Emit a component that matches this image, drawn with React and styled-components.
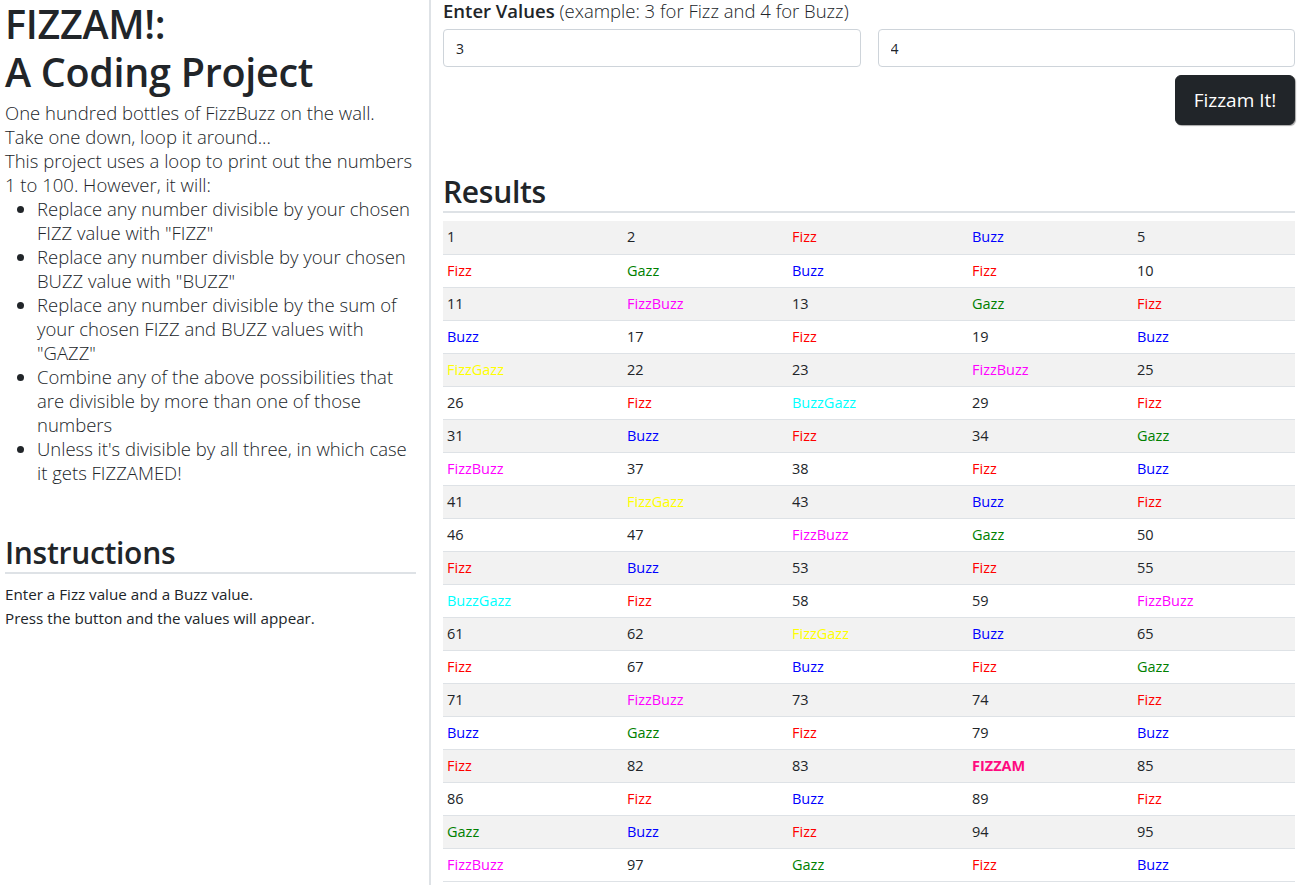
import React from "react";
import styled, { createGlobalStyle } from "styled-components";

const Global = createGlobalStyle`
  html, body { margin: 0; padding: 0; background: #fff; }
  body {
    font-family: "Open Sans", "Noto Sans", sans-serif;
    color: #212529;
    font-size: 16px;
    line-height: 1.5;
  }
  * { box-sizing: border-box; }
`;

const Page = styled.div`
  display: flex;
  align-items: stretch;
  min-height: 885px;
`;

const Side = styled.aside`
  width: 431px;
  flex: none;
  padding: 0 13px 0 5px;
  border-right: 2px solid #dee2e6;
`;

const Main = styled.main`
  flex: 1;
  padding: 0 5px 0 12px;
`;

const Title = styled.h1`
  margin: 0 0 5px;
  font-size: 39.5px;
  font-weight: 600;
  line-height: 48px;
  letter-spacing: -0.3px;
`;

const Lead = styled.p`
  margin: 0;
  font-size: 18.5px;
  font-weight: 300;
  line-height: 24px;
`;

const RuleList = styled.ul`
  margin: 0;
  padding-left: 32px;
  font-size: 18.5px;
  font-weight: 300;
  line-height: 24px;
`;

const SectionTitle = styled.h2`
  margin: ${(p) => p.$top || 0}px 0 0;
  font-size: 30px;
  font-weight: 600;
  line-height: 36px;
  padding-bottom: 1px;
  border-bottom: 2px solid #dee2e6;
  letter-spacing: -0.3px;
`;

const Instructions = styled.div`
  margin-top: 8px;
  font-size: 15.2px;
  line-height: 24px;
`;

const Label = styled.div`
  font-size: 18.5px;
  line-height: 22px;
  margin-bottom: 7px;
`;

const LabelStrong = styled.span`
  font-weight: 600;
`;

const LabelHint = styled.span`
  font-weight: 300;
`;

const InputRow = styled.div`
  display: grid;
  grid-template-columns: 1fr 1fr;
  gap: 17px;
`;

const Input = styled.input`
  height: 38px;
  width: 100%;
  padding: 6px 12px;
  font-family: inherit;
  font-size: 14px;
  color: #212529;
  border: 1px solid #ced4da;
  border-radius: 4px;
  background: #fff;
  outline: none;
`;

const ButtonRow = styled.div`
  display: flex;
  justify-content: flex-end;
  margin-top: 8px;
`;

const Button = styled.button`
  height: 50px;
  width: 120px;
  background: #212529;
  color: #fff;
  border: 1px solid #212529;
  border-radius: 6px;
  font-family: inherit;
  font-size: 19px;
  box-shadow: 1px 1px 1px rgba(0, 0, 0, 0.35);
`;

const Table = styled.table`
  width: 100%;
  margin-top: 8px;
  border-collapse: collapse;
  table-layout: fixed;
  font-size: 14.5px;
`;

const Row = styled.tr`
  background: ${(p) => (p.$odd ? "#f2f2f2" : "#fff")};
  border-bottom: 1px solid #dee2e6;
`;

const Cell = styled.td`
  height: 33px;
  padding: 4px 4px;
  color: ${(p) => p.$color};
  font-weight: ${(p) => (p.$bold ? 700 : 400)};
  white-space: nowrap;
`;

function classify(n, fizz, buzz) {
  const f = n % fizz === 0;
  const b = n % buzz === 0;
  const g = n % (fizz + buzz) === 0;
  if (f && b && g) return { text: "FIZZAM", color: "#ff0a80", bold: true };
  let text = "";
  if (f) text += "Fizz";
  if (b) text += "Buzz";
  if (g) text += "Gazz";
  const colors = {
    Fizz: "#ff0000",
    Buzz: "#0000ff",
    Gazz: "#008000",
    FizzBuzz: "#ff00ff",
    FizzGazz: "#ffff00",
    BuzzGazz: "#00ffff",
  };
  if (!text) return { text: String(n), color: "#212529" };
  return { text, color: colors[text] };
}

const COLS = [180, 165, 180, 165, 162];

export default function App() {
  const rows = [];
  for (let r = 0; r < 20; r++) {
    const cells = [];
    for (let c = 0; c < 5; c++) cells.push(classify(r * 5 + c + 1, 3, 4));
    rows.push(cells);
  }
  return (
    <>
      <Global />
      <Page>
        <Side>
          <Title>
            FIZZAM!:
            <br />A Coding Project
          </Title>
          <Lead>
            One hundred bottles of FizzBuzz on the wall.
            <br />
            Take one down, loop it around...
            <br />
            This project uses a loop to print out the numbers 1 to 100. However, it will:
          </Lead>
          <RuleList>
            <li>Replace any number divisible by your chosen FIZZ value with "FIZZ"</li>
            <li>Replace any number divisble by your chosen BUZZ value with "BUZZ"</li>
            <li>
              Replace any number divisible by the sum of your chosen FIZZ and BUZZ values with
              "GAZZ"
            </li>
            <li>
              Combine any of the above possibilities that are divisible by more than one of those
              numbers
            </li>
            <li>Unless it's divisible by all three, in which case it gets FIZZAMED!</li>
          </RuleList>
          <SectionTitle $top={50}>Instructions</SectionTitle>
          <Instructions>
            Enter a Fizz value and a Buzz value.
            <br />
            Press the button and the values will appear.
          </Instructions>
        </Side>
        <Main>
          <Label>
            <LabelStrong>Enter Values</LabelStrong>{" "}
            <LabelHint>(example: 3 for Fizz and 4 for Buzz)</LabelHint>
          </Label>
          <InputRow>
            <Input defaultValue="3" />
            <Input defaultValue="4" />
          </InputRow>
          <ButtonRow>
            <Button>Fizzam It!</Button>
          </ButtonRow>
          <SectionTitle $top={49}>Results</SectionTitle>
          <Table>
            <colgroup>
              {COLS.map((w, i) => (
                <col key={i} style={{ width: w }} />
              ))}
            </colgroup>
            <tbody>
              {rows.map((cells, i) => (
                <Row key={i} $odd={i % 2 === 0}>
                  {cells.map((c, j) => (
                    <Cell key={j} $color={c.color} $bold={c.bold}>
                      {c.text}
                    </Cell>
                  ))}
                </Row>
              ))}
            </tbody>
          </Table>
        </Main>
      </Page>
    </>
  );
}
